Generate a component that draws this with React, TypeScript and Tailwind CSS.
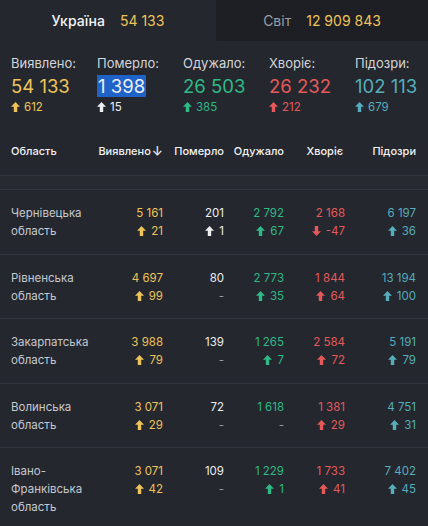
import React from "react";

type Delta = number | null;

const colors = {
  yellow: "text-[#eec45a]",
  white: "text-[#eceef1]",
  green: "text-[#2fb985]",
  red: "text-[#e45a5a]",
  teal: "text-[#56adbb]",
};

function Arrow({ down = false, className = "" }: { down?: boolean; className?: string }) {
  return (
    <svg
      viewBox="0 0 10 11"
      className={`inline-block h-[10px] w-[9px] fill-current ${down ? "rotate-180" : ""} ${className}`}
    >
      <path d="M5 0 L10 5.2 L6.9 5.2 L6.9 11 L3.1 11 L3.1 5.2 L0 5.2 Z" />
    </svg>
  );
}

function DeltaCell({ value, color }: { value: Delta; color: string }) {
  if (value === null) return <div className="text-[#9a9ea6]">-</div>;
  return (
    <div className={`flex items-center justify-end gap-[5px] ${color}`}>
      <Arrow down={value < 0} />
      <span>{value}</span>
    </div>
  );
}

const stats = [
  { label: "Виявлено:", value: "54 133", delta: "612", color: colors.yellow },
  { label: "Померло:", value: "1 398", delta: "15", color: colors.white, selected: true },
  { label: "Одужало:", value: "26 503", delta: "385", color: colors.green },
  { label: "Хворіє:", value: "26 232", delta: "212", color: colors.red },
  { label: "Підозри:", value: "102 113", delta: "679", color: colors.teal },
];

type Row = {
  name: string[];
  values: string[];
  deltas: Delta[];
};

const rows: Row[] = [
  {
    name: ["Чернівецька", "область"],
    values: ["5 161", "201", "2 792", "2 168", "6 197"],
    deltas: [21, 1, 67, -47, 36],
  },
  {
    name: ["Рівненська", "область"],
    values: ["4 697", "80", "2 773", "1 844", "13 194"],
    deltas: [99, null, 35, 64, 100],
  },
  {
    name: ["Закарпатська", "область"],
    values: ["3 988", "139", "1 265", "2 584", "5 191"],
    deltas: [79, null, 7, 72, 79],
  },
  {
    name: ["Волинська", "область"],
    values: ["3 071", "72", "1 618", "1 381", "4 751"],
    deltas: [29, null, null, 29, 31],
  },
  {
    name: ["Івано-", "Франківська", "область"],
    values: ["3 071", "109", "1 229", "1 733", "7 402"],
    deltas: [42, null, 1, 41, 45],
  },
];

const colColors = [colors.yellow, colors.white, colors.green, colors.red, colors.teal];
const grid = "grid grid-cols-[92px_60px_61px_60px_61px_71px] pl-[11px] pr-[12px]";

export default function App() {
  return (
    <div
      className="min-h-[526px] w-[428px] bg-[#24272e] text-[#eceef1]"
      style={{ fontFamily: "Inter, 'Noto Sans', sans-serif" }}
    >
      {/* tabs */}
      <div className="flex h-[41px]">
        <div className="flex flex-1 items-center justify-center gap-[15px] text-[14px]">
          <span className="font-medium text-[#f2f3f5]">Україна</span>
          <span className={colors.yellow}>54 133</span>
        </div>
        <div className="flex w-[212px] items-center justify-center gap-[15px] rounded-bl-[3px] bg-[#1d1f25] text-[14px]">
          <span className="text-[#9a9ea6]">Світ</span>
          <span className={colors.yellow}>12 909 843</span>
        </div>
      </div>

      {/* summary */}
      <div className="flex h-[87px] pl-[11px] pt-[14px]">
        {stats.map((s, i) => (
          <div key={s.label} className={i === 4 ? "" : "w-[86px] shrink-0"}>
            <div className="text-[13px] leading-[16px] text-[#d3d5da]">{s.label}</div>
            <div className={`mt-[3px] text-[18.5px] leading-[24px] ${s.color}`}>
              <span className={s.selected ? "bg-[#1f63c9] px-[1px]" : ""}>{s.value}</span>
            </div>
            <div className={`mt-[1px] flex items-center gap-[4px] text-[11.5px] leading-[16px] ${s.color}`}>
              <Arrow />
              <span>{s.delta}</span>
            </div>
          </div>
        ))}
      </div>

      {/* table header */}
      <div className={`${grid} h-[48px] items-center border-b border-[#32353d] text-[11px] font-medium text-[#f2f3f5]`}>
        <div>Область</div>
        <div className="flex items-center justify-end gap-[1px]">
          Виявлено
          <span className="text-[13px] leading-none">↓</span>
        </div>
        <div className="text-right">Померло</div>
        <div className="text-right">Одужало</div>
        <div className="pr-[2px] text-right">Хворіє</div>
        <div className="text-right">Підозри</div>
      </div>
      <div className="h-[14px] border-b border-[#32353d] bg-[#272a31]" />

      {/* rows */}
      {rows.map((r) => (
        <div key={r.name.join(" ")} className={`${grid} border-b border-[#32353d] pb-[13.5px] pt-[14px] text-[11.5px] leading-[18px]`}>
          <div className="text-[#c5c8ce]">
            {r.name.map((n) => (
              <div key={n}>{n}</div>
            ))}
          </div>
          {r.values.map((v, i) => (
            <div key={i} className="text-right">
              <div className={colColors[i]}>{v}</div>
              <DeltaCell value={r.deltas[i]} color={colColors[i]} />
            </div>
          ))}
        </div>
      ))}
    </div>
  );
}
